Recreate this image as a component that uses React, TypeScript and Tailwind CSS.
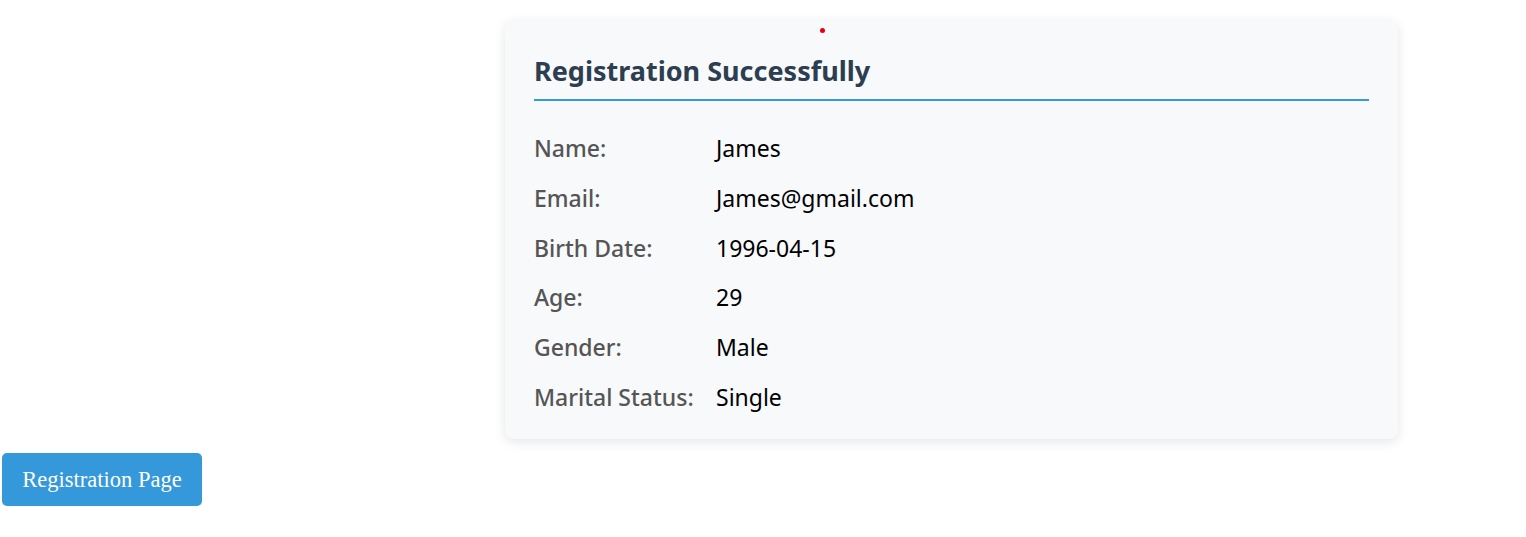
const rows = [
  { label: "Name:", value: "James" },
  { label: "Email:", value: "James@gmail.com" },
  { label: "Birth Date:", value: "1996-04-15" },
  { label: "Age:", value: "29" },
  { label: "Gender:", value: "Male" },
  { label: "Marital Status:", value: "Single" },
];

const App = () => {
  return (
    <div className="w-full min-h-screen bg-white font-['Noto_Sans',sans-serif]">
      <div className="pt-5 pl-[505px]">
        <div className="relative w-[893px] rounded-[9px] bg-[#f7f9fb] px-[29px] pt-[31px] pb-[9px] shadow-[0_3px_12px_rgba(0,0,0,0.1)]">
          <span className="absolute left-[315px] top-2 w-[5px] h-[5px] rounded-full bg-red-600" />
          <h2 className="text-[27px] leading-[40px] font-bold text-[#2c3e50] pb-[8px] border-b-2 border-[#3498db]">
            Registration Successfully
          </h2>
          <div className="pt-[31px]">
            {rows.map((row) => (
              <div key={row.label} className="flex items-center h-[33px] mb-[16.7px] text-[23px]">
                <span className="w-[182px] shrink-0 font-medium text-[#555]">{row.label}</span>
                <span className="text-black">{row.value}</span>
              </div>
            ))}
          </div>
        </div>
      </div>
      <button className="mt-[14px] ml-[2px] w-[200px] h-[53px] rounded-[5px] bg-[#3498db] text-white text-[22.5px] font-['Liberation_Serif',serif]">
        Registration Page
      </button>
    </div>
  );
};

export default App;
